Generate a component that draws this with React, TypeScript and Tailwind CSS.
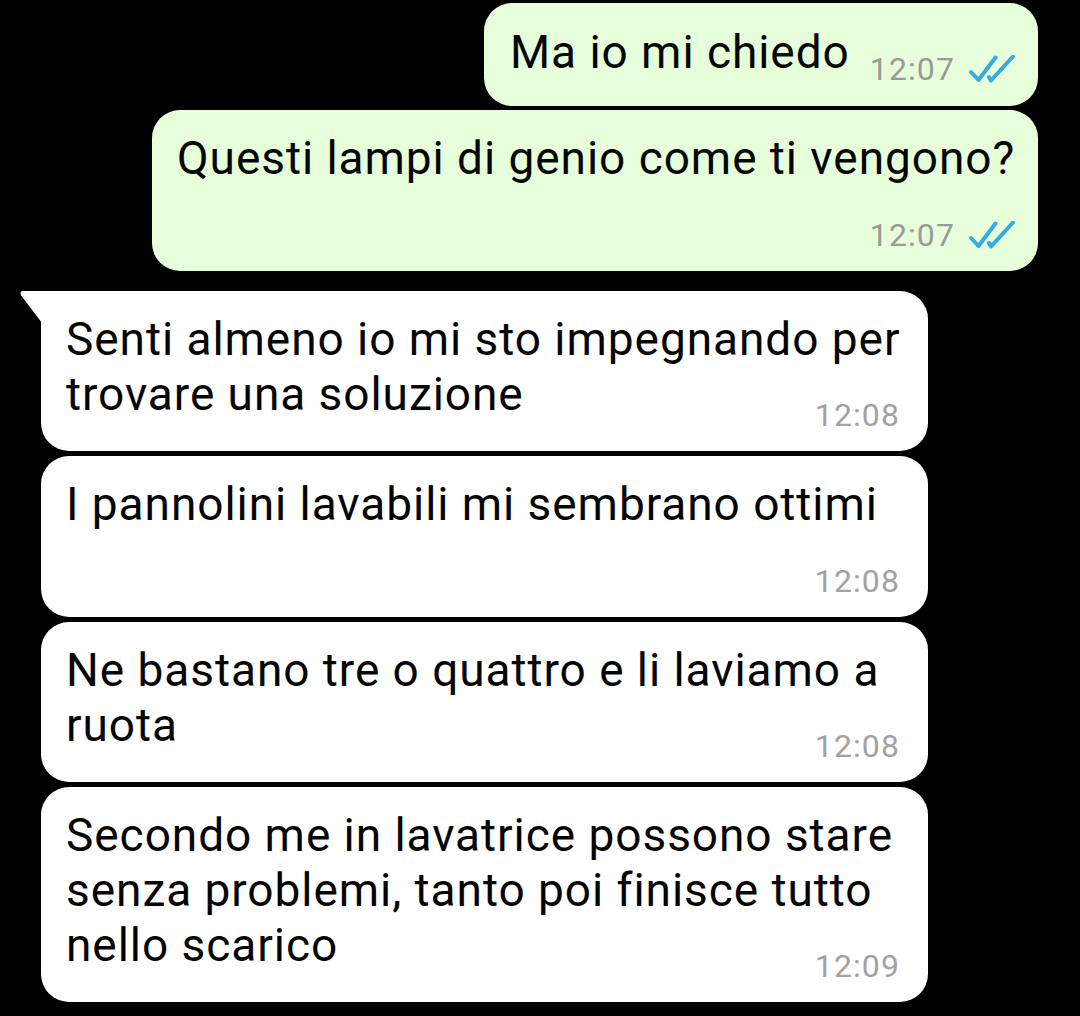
import React from "react";

type Msg = {
  out: boolean;
  lines: string[];
  time: string;
  inline: boolean;
  width: string;
  tail?: boolean;
  gap: string;
};

const messages: Msg[] = [
  { out: true, lines: ["Questi lampi di genio come ti vengono?"], time: "12:07", inline: false, width: "w-[886px]", gap: "mt-[4px]" },
  { out: false, lines: ["Senti almeno io mi sto impegnando per", "trovare una soluzione"], time: "12:08", inline: true, width: "w-[887px]", tail: true, gap: "mt-[20px]" },
  { out: false, lines: ["I pannolini lavabili mi sembrano ottimi"], time: "12:08", inline: false, width: "w-[887px]", gap: "mt-[5px]" },
  { out: false, lines: ["Ne bastano tre o quattro e li laviamo a", "ruota"], time: "12:08", inline: true, width: "w-[887px]", gap: "mt-[5px]" },
  { out: false, lines: ["Secondo me in lavatrice possono stare", "senza problemi, tanto poi finisce tutto", "nello scarico"], time: "12:09", inline: true, width: "w-[887px]", gap: "mt-[5px]" },
];

function Ticks() {
  return (
    <svg width="46" height="28" viewBox="0 0 46 28" fill="none" stroke="#35aae3" strokeWidth="4" strokeLinecap="round" strokeLinejoin="round">
      <path d="M2 17 L9.5 25 L26.5 2.5" />
      <path d="M20 22 L22 25.5 L44 1.5" />
    </svg>
  );
}

function Bubble({ m }: { m: Msg }) {
  return (
    <div className={`${m.gap} flex ${m.out ? "justify-end pr-[42px]" : "justify-start pl-[41px]"}`}>
      <div
        className={`relative ${m.width} ${
          m.out ? "bg-[#e6ffda] pl-[25px] pr-[23px]" : "bg-white pl-[25px] pr-[28px]"
        } rounded-[28px] ${m.tail ? "rounded-tl-none" : ""} pt-[21px] pb-[17px]`}
      >
        {m.tail && (
          <svg className="absolute left-[-21px] top-0" width="22" height="34" viewBox="0 0 22 34">
            <path d="M3 0 H22 V32 L1.2 4.5 Q-0.8 0 3 0 Z" fill="#fff" />
          </svg>
        )}
        <div className="text-[46px] leading-[55px] tracking-[0.95px] text-[#050505] whitespace-nowrap">
          {m.lines.map((l, i) => (
            <div key={i}>{l}</div>
          ))}
        </div>
        <div
          className={`flex justify-end items-center gap-[14px] h-[38px] ${
            m.inline ? "-mt-[26px]" : "mt-[30px]"
          }`}
        >
          <span className={`text-[32px] leading-[38px] tracking-[1.1px] ${m.out ? "text-[#9a9a9a]" : "text-[#a2a2a2]"}`}>
            {m.time}
          </span>
          {m.out && <Ticks />}
        </div>
      </div>
    </div>
  );
}

export default function App() {
  return (
    <div className="bg-black w-[1080px] h-[1016px] overflow-hidden pt-[3px]" style={{ fontFamily: "Roboto, 'Noto Sans', sans-serif" }}>
      {/* first outgoing, time inline with text */}
      <div className="flex justify-end pr-[42px]">
        <div className="w-[554px] bg-[#e6ffda] rounded-[28px] pl-[26px] pr-[23px] pt-[22px] pb-[26px] flex items-end">
          <span className="text-[46px] leading-[55px] tracking-[0.95px] text-[#050505] whitespace-nowrap">Ma io mi chiedo</span>
          <div className="ml-auto flex items-center gap-[14px] -mb-[8px] h-[38px]">
            <span className="text-[32px] leading-[38px] tracking-[1.1px] text-[#9a9a9a]">12:07</span>
            <Ticks />
          </div>
        </div>
      </div>
      {messages.map((m, i) => (
        <Bubble key={i} m={m} />
      ))}
    </div>
  );
}
